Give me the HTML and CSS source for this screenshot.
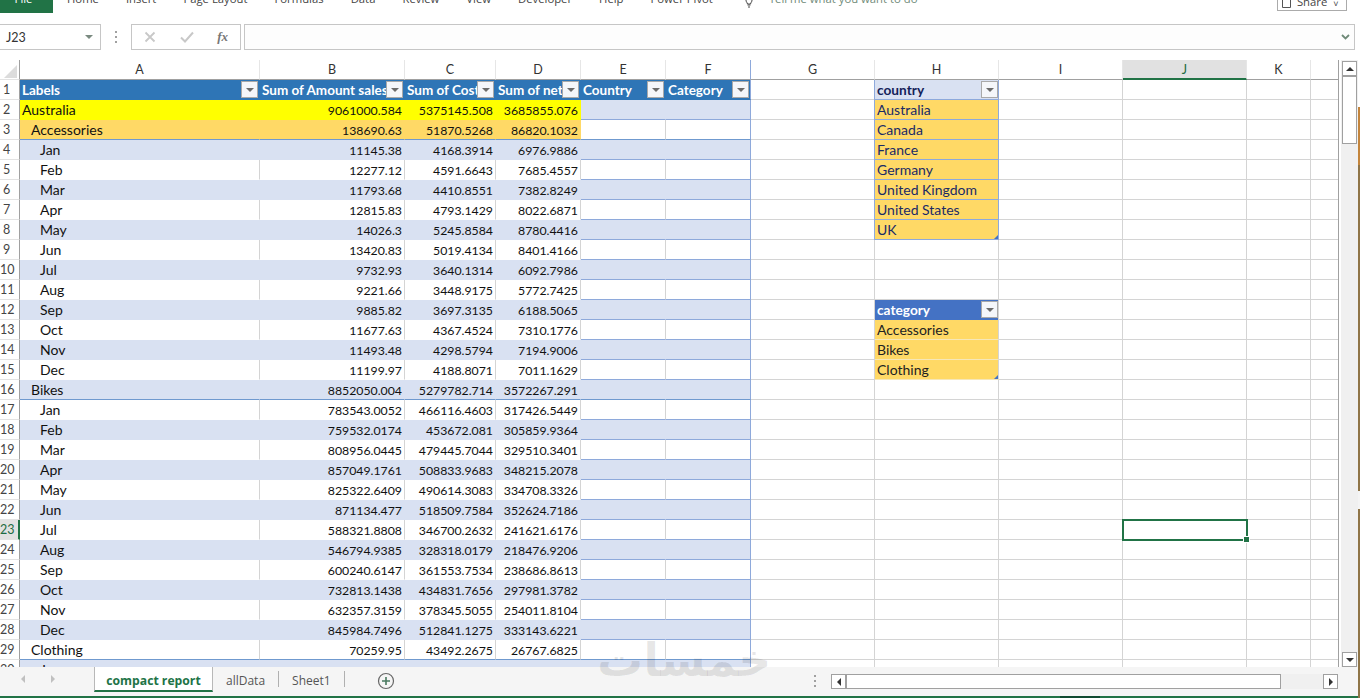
FILE: index.html
```html
<!DOCTYPE html>
<html lang="en">
<head>
<meta charset="utf-8">
<title>compact report</title>
<link rel="stylesheet" href="styles.css">
</head>
<body>
<div class="app">
<div class="main">
  <header class="ribbon">
    <div class="file"><span>File</span></div>
    <nav class="tabs"><span>Home</span><span>Insert</span><span>Page Layout</span><span>Formulas</span><span>Data</span><span>Review</span><span>View</span><span>Developer</span><span>Help</span><span>Power Pivot</span></nav>
    <svg class="bulb" width="12" height="8" viewBox="0 0 12 8"><path d="M3 0c0 2 1 2 1.500 4h3C8 2 9 2 9 0M4.500 5h3M5 7h2" fill="none" stroke="#444" stroke-width="1"/></svg>
    <span class="tell">Tell me what you want to do</span>
    <div class="share"><svg width="9" height="9" viewBox="0 0 9 9"><path d="M.5 0v8.500h8V0" fill="none" stroke="#555"/></svg><span>Share</span><b>&#709;</b></div>
  </header>
  <div class="fbar">
    <div class="namebox"><span>J23</span><i class="tri"></i></div>
    <div class="grip"></div>
    <div class="fxgroup">
      <svg width="12" height="12" viewBox="0 0 12 12"><path d="M1.500 1.500l9 9M10.500 1.500l-9 9" stroke="#c8c8c8" stroke-width="1.800"/></svg>
      <svg width="14" height="12" viewBox="0 0 14 12"><path d="M1 6.500l4 4 8-9" fill="none" stroke="#c8c8c8" stroke-width="2"/></svg>
      <em>fx</em>
    </div>
    <div class="finput"><svg width="9" height="6" viewBox="0 0 9 6"><path d="M1 1l3.500 3.500L8 1" fill="none" stroke="#6f8a78" stroke-width="1.800"/></svg></div>
  </div>
  <div class="work">
    <div class="sheet">
      <div class="row chead"><span class="corner"><svg width="13" height="13" viewBox="0 0 13 13"><path d="M13 0v13H0z" fill="#dcdcdc"/></svg></span><span>A</span><span>B</span><span>C</span><span>D</span><span>E</span><span>F</span><span>G</span><span>H</span><span>I</span><span class="cursel">J</span><span>K</span><span></span></div>
      <div class="row r-head"><span>1</span><span>Labels<i class="dd"></i></span><span>Sum of Amount sales<i class="dd"></i></span><span>Sum of Cost<i class="dd"></i></span><span>Sum of net<i class="dd"></i></span><span>Country<i class="dd"></i></span><span>Category<i class="dd"></i></span><span></span><span class="sl-h1">country<i class="dd"></i></span><span></span><span></span><span></span><span></span></div>
      <div class="row r-yellow r-band"><span>2</span><span>Australia</span><span>9061000.584</span><span>5375145.508</span><span>3685855.076</span><span></span><span></span><span></span><span class="sl1">Australia</span><span></span><span></span><span></span><span></span></div>
      <div class="row r-orange r-rule"><span>3</span><span class="l1">Accessories</span><span>138690.63</span><span>51870.5268</span><span>86820.1032</span><span></span><span></span><span></span><span class="sl1">Canada</span><span></span><span></span><span></span><span></span></div>
      <div class="row r-band"><span>4</span><span class="l2">Jan</span><span>11145.38</span><span>4168.3914</span><span>6976.9886</span><span></span><span></span><span></span><span class="sl1">France</span><span></span><span></span><span></span><span></span></div>
      <div class="row r-plain"><span>5</span><span class="l2">Feb</span><span>12277.12</span><span>4591.6643</span><span>7685.4557</span><span></span><span></span><span></span><span class="sl1">Germany</span><span></span><span></span><span></span><span></span></div>
      <div class="row r-band"><span>6</span><span class="l2">Mar</span><span>11793.68</span><span>4410.8551</span><span>7382.8249</span><span></span><span></span><span></span><span class="sl1">United Kingdom</span><span></span><span></span><span></span><span></span></div>
      <div class="row r-plain"><span>7</span><span class="l2">Apr</span><span>12815.83</span><span>4793.1429</span><span>8022.6871</span><span></span><span></span><span></span><span class="sl1">United States</span><span></span><span></span><span></span><span></span></div>
      <div class="row r-band"><span>8</span><span class="l2">May</span><span>14026.3</span><span>5245.8584</span><span>8780.4416</span><span></span><span></span><span></span><span class="sl1 end">UK</span><span></span><span></span><span></span><span></span></div>
      <div class="row r-plain"><span>9</span><span class="l2">Jun</span><span>13420.83</span><span>5019.4134</span><span>8401.4166</span><span></span><span></span><span></span><span class="sl-blank"></span><span></span><span></span><span></span><span></span></div>
      <div class="row r-band"><span>10</span><span class="l2">Jul</span><span>9732.93</span><span>3640.1314</span><span>6092.7986</span><span></span><span></span><span></span><span class="sl-blank"></span><span></span><span></span><span></span><span></span></div>
      <div class="row r-plain"><span>11</span><span class="l2">Aug</span><span>9221.66</span><span>3448.9175</span><span>5772.7425</span><span></span><span></span><span></span><span class="sl-blank"></span><span></span><span></span><span></span><span></span></div>
      <div class="row r-band"><span>12</span><span class="l2">Sep</span><span>9885.82</span><span>3697.3135</span><span>6188.5065</span><span></span><span></span><span></span><span class="sl-h2">category<i class="dd"></i></span><span></span><span></span><span></span><span></span></div>
      <div class="row r-plain"><span>13</span><span class="l2">Oct</span><span>11677.63</span><span>4367.4524</span><span>7310.1776</span><span></span><span></span><span></span><span class="sl2">Accessories</span><span></span><span></span><span></span><span></span></div>
      <div class="row r-band"><span>14</span><span class="l2">Nov</span><span>11493.48</span><span>4298.5794</span><span>7194.9006</span><span></span><span></span><span></span><span class="sl2">Bikes</span><span></span><span></span><span></span><span></span></div>
      <div class="row r-plain"><span>15</span><span class="l2">Dec</span><span>11199.97</span><span>4188.8071</span><span>7011.1629</span><span></span><span></span><span></span><span class="sl2 end">Clothing</span><span></span><span></span><span></span><span></span></div>
      <div class="row r-band r-rule"><span>16</span><span class="l1">Bikes</span><span>8852050.004</span><span>5279782.714</span><span>3572267.291</span><span></span><span></span><span></span><span class="sl-blank"></span><span></span><span></span><span></span><span></span></div>
      <div class="row r-plain"><span>17</span><span class="l2">Jan</span><span>783543.0052</span><span>466116.4603</span><span>317426.5449</span><span></span><span></span><span></span><span class="sl-blank"></span><span></span><span></span><span></span><span></span></div>
      <div class="row r-band"><span>18</span><span class="l2">Feb</span><span>759532.0174</span><span>453672.081</span><span>305859.9364</span><span></span><span></span><span></span><span class="sl-blank"></span><span></span><span></span><span></span><span></span></div>
      <div class="row r-plain"><span>19</span><span class="l2">Mar</span><span>808956.0445</span><span>479445.7044</span><span>329510.3401</span><span></span><span></span><span></span><span class="sl-blank"></span><span></span><span></span><span></span><span></span></div>
      <div class="row r-band"><span>20</span><span class="l2">Apr</span><span>857049.1761</span><span>508833.9683</span><span>348215.2078</span><span></span><span></span><span></span><span class="sl-blank"></span><span></span><span></span><span></span><span></span></div>
      <div class="row r-plain"><span>21</span><span class="l2">May</span><span>825322.6409</span><span>490614.3083</span><span>334708.3326</span><span></span><span></span><span></span><span class="sl-blank"></span><span></span><span></span><span></span><span></span></div>
      <div class="row r-band"><span>22</span><span class="l2">Jun</span><span>871134.477</span><span>518509.7584</span><span>352624.7186</span><span></span><span></span><span></span><span class="sl-blank"></span><span></span><span></span><span></span><span></span></div>
      <div class="row r-plain"><span class="rowsel">23</span><span class="l2">Jul</span><span>588321.8808</span><span>346700.2632</span><span>241621.6176</span><span></span><span></span><span></span><span class="sl-blank"></span><span></span><span class="active"></span><span></span><span></span></div>
      <div class="row r-band"><span>24</span><span class="l2">Aug</span><span>546794.9385</span><span>328318.0179</span><span>218476.9206</span><span></span><span></span><span></span><span class="sl-blank"></span><span></span><span></span><span></span><span></span></div>
      <div class="row r-plain"><span>25</span><span class="l2">Sep</span><span>600240.6147</span><span>361553.7534</span><span>238686.8613</span><span></span><span></span><span></span><span class="sl-blank"></span><span></span><span></span><span></span><span></span></div>
      <div class="row r-band"><span>26</span><span class="l2">Oct</span><span>732813.1438</span><span>434831.7656</span><span>297981.3782</span><span></span><span></span><span></span><span class="sl-blank"></span><span></span><span></span><span></span><span></span></div>
      <div class="row r-plain"><span>27</span><span class="l2">Nov</span><span>632357.3159</span><span>378345.5055</span><span>254011.8104</span><span></span><span></span><span></span><span class="sl-blank"></span><span></span><span></span><span></span><span></span></div>
      <div class="row r-band"><span>28</span><span class="l2">Dec</span><span>845984.7496</span><span>512841.1275</span><span>333143.6221</span><span></span><span></span><span></span><span class="sl-blank"></span><span></span><span></span><span></span><span></span></div>
      <div class="row r-plain r-rule"><span>29</span><span class="l1">Clothing</span><span>70259.95</span><span>43492.2675</span><span>26767.6825</span><span></span><span></span><span></span><span class="sl-blank"></span><span></span><span></span><span></span><span></span></div>
      <div class="row r-band"><span>30</span><span class="l2">Jan</span><span>8391.43</span><span>3890.5743</span><span>2400.7053</span><span></span><span></span><span></span><span class="sl-blank"></span><span></span><span></span><span></span><span></span></div>
    </div>
    <div class="vscroll">
      <div class="sbtn up"><i></i></div>
      <div class="thumb"></div>
      <div class="track"></div>
      <div class="sbtn down"><i></i></div>
    </div>
  </div>
  <footer class="sheetbar">
    <div class="navs"><i class="nl"></i><i class="nr"></i></div>
    <div class="stab active-tab">compact report</div>
    <div class="stab sep">allData</div>
    <div class="stab sep">Sheet1</div>
    <svg class="plus" width="18" height="18" viewBox="0 0 18 18"><circle cx="9" cy="9" r="7.500" fill="none" stroke="#666" stroke-width="1.200"/><path d="M9 5v8M5 9h8" stroke="#4a7a60" stroke-width="1.600"/></svg>
    <div class="hzone">
      <div class="grip"></div>
      <div class="hbtn"><i class="bl"></i></div>
      <div class="hthumb"></div>
      <div class="htrack"></div>
      <div class="hbtn"><i class="br"></i></div>
    </div>
  </footer>
  <div class="status"><i></i></div>
  <div class="mark" dir="rtl" lang="ar">خمسات</div>
</div>
<div class="edge"></div>
</div>
</body>
</html>
```
FILE: styles.css
```css
*, *::before, *::after { box-sizing: border-box; }
html, body { margin: 0; height: 100%; overflow: hidden; background: #fff; }
body { font-family: "Lato", "Liberation Sans", sans-serif; color: #111; }
.app { display: flex; width: 1360px; height: 698px; }
.main { position: relative; width: 1358px; height: 698px; display: flex; flex-direction: column; overflow: hidden; background: #fff; }
.edge { width: 2px; height: 698px; background: linear-gradient(#fff 0 107px, #c4853c 107px 165px, #8f7548 165px 491px, #f4f4f4 491px 509px, #8f7548 509px); }

/* ribbon */
.ribbon { height: 24px; flex: none; display: flex; align-items: flex-start; overflow: hidden; font-family: "Open Sans", sans-serif; font-size: 11.300px; color: #444; }
.file { width: 53px; height: 13px; background: #217346; color: #fff; text-align: center; line-height: 6px; flex: none; overflow: hidden; padding-right: 6px; }
.file span { display: block; margin-top: -4px; }
.tabs { display: flex; gap: 27px; margin-left: 14px; margin-top: -4px; line-height: 6px; height: 13px; flex: none; }
.bulb { margin: 0 0 0 30px; flex: none; }
.tell { margin-left: 14px; margin-top: -4px; line-height: 6px; color: #6f8a78; flex: none; width: 150px; white-space: nowrap; }
.share { margin-left: 358px; margin-top: -4px; width: 70px; height: 15px; border: 1px solid #ababab; display: flex; align-items: center; gap: 6px; padding: 0 4px; flex: none; background: #fff; line-height: 14px; }
.share span { margin-top: -3px; }
.share b { font-weight: 400; font-size: 9px; }

/* formula bar */
.fbar { height: 26px; flex: none; display: flex; background: #fff; }
.namebox { width: 101px; height: 26px; border: 1px solid #c6c6c6; border-left: 0; display: flex; align-items: center; justify-content: space-between; padding: 0 7px 0 6px; font-size: 12.500px; color: #333; }
.tri { width: 0; height: 0; border: 4px solid transparent; border-top: 4px solid #7a8a80; border-bottom: 0; }
.fbar > .grip { width: 30px; height: 26px; }
.grip { position: relative; flex: none; }
.grip::before { content: ""; position: absolute; left: 14px; top: 12px; width: 2px; height: 2px; background: #a0a0a0; box-shadow: 0 -5px #a0a0a0, 0 5px #a0a0a0; }
.fxgroup { width: 110px; height: 26px; border: 1px solid #c6c6c6; display: flex; align-items: center; justify-content: space-between; padding: 0 12px; flex: none; }
.fxgroup em { font-family: "Liberation Serif", serif; font-size: 13px; font-weight: 700; color: #777; }
.finput { margin-left: 3px; width: 1111px; height: 26px; border: 1px solid #c6c6c6; background: #fdfdfd; display: flex; align-items: center; justify-content: flex-end; padding-right: 4px; flex: none; }

/* worksheet */
.work { flex: 1; min-height: 0; padding-top: 10px; display: flex; }
.sheet { width: 1339px; height: 607px; overflow: hidden; flex: none; border-right: 1px solid #a0a0a0; }
.row { display: grid; grid-template-columns: 20px 240px 145px 91px 85px 85px 85px 124px 124px 124px 124px 64px 27px; height: 20px; font-size: 14px; }
.row > span { position: relative; display: block; height: 20px; line-height: 19px; padding: 0 2px; border-right: 1px solid #d4d4d4; border-bottom: 1px solid #d4d4d4; white-space: nowrap; overflow: hidden; }
.row > span:nth-child(2) { overflow: visible; }
.row > span:first-child { text-align: center; padding: 0 6px 0 0; color: #444; font-size: 12.500px; line-height: 20px; border-right: 1px solid #a0a0a0; border-bottom-color: #e3e3e3; background: #fff; }
.row > span:nth-child(n+3):nth-child(-n+5) { text-align: right; font-size: 12.300px; line-height: 21px; }
.row > span:last-child { border-right: 0; }
.chead > span { text-align: center !important; line-height: 19px !important; font-size: 12.500px !important; border-bottom: 1px solid #a0a0a0; border-right: 1px solid #e6e6e6; color: #333; padding: 0; background: #fff; }
.chead > .corner { border-bottom: 1px solid #a0a0a0; text-align: left !important; }
.corner svg { position: absolute; left: 4px; top: 5px; }
.chead > .cursel { background: #e1e1e1; color: #1d6b42; border-bottom: 2px solid #217346; }
.rowsel { background: #e1e1e1 !important; color: #1d6b42 !important; border-right: 2px solid #217346 !important; }

.l1 { padding-left: 11px !important; }
.l2 { padding-left: 20px !important; }

/* pivot table rows */
.r-head > span:nth-child(n+2):nth-child(-n+7) { background: #2e75b6; color: #fff; font-weight: 700; font-size: 13.500px; line-height: 21px; text-align: left !important; border-color: transparent; }
.r-head > span:nth-child(2) { overflow: hidden; }
.r-yellow > span:nth-child(n+2):nth-child(-n+5) { background: #ff0 !important; color: #111; border-right-color: transparent; border-bottom-color: #f0f0e0; }
.r-orange > span:nth-child(n+2):nth-child(-n+5) { background: #ffd966 !important; border-right-color: transparent; }
.r-band > span:nth-child(n+2):nth-child(-n+7) { background: #d9e1f2; border-right-color: transparent; border-bottom-color: transparent; }
.r-plain > span:nth-child(n+2):nth-child(-n+5) { border-bottom-color: transparent; }
.row:not(.chead):not(.r-head) > span:nth-child(6), .row:not(.chead):not(.r-head) > span:nth-child(7) { border-bottom: 1px solid #8ea9db; }
.row > span:nth-child(7) { border-right: 1px solid #8ea9db !important; }
.r-rule > span:nth-child(n+2):nth-child(-n+7) { border-bottom: 1px solid #6f99cf !important; }

/* dropdown buttons */
.dd { position: absolute; right: 1px; top: 1px; width: 17px; height: 17px; background: #f4f6fa; border: 1px solid #a9a9a9; }
.dd::after { content: ""; position: absolute; left: 4px; top: 6px; border: 4px solid transparent; border-top: 4px solid #6b6b6b; border-bottom: 0; }
.sl-h1 .dd, .sl-h2 .dd { right: 0; }

/* slicer tables */
.row > .sl-blank { box-shadow: -1px 0 0 #d4d4d4; }
.row > .sl-h1 { background: #d9e1f2; color: #14235a; font-weight: 700; font-size: 13.700px; box-shadow: -1px 0 0 #8ea9db; border-right: 1px solid #8ea9db; border-bottom: 1px solid #8ea9db; }
.row > .sl-h2 { background: #4472c4; color: #fff; font-weight: 700; font-size: 13.700px; border-right: 1px solid #d4d4d4; border-bottom: 0; box-shadow: -1px 0 0 #d4d4d4; }
.row > .sl1 { background: #ffd966; color: #1a2a66; box-shadow: -1px 0 0 #8ea9db; border-right: 1px solid #8ea9db; border-bottom: 1px solid #8ea9db; }
.row > .sl2 { background: #ffd966; color: #222; box-shadow: -1px 0 0 #d4d4d4; border-bottom: 1px solid #f6e7b8; border-right: 1px solid #d4d4d4; }
.end::after { content: ""; position: absolute; right: 0; bottom: 0; border-left: 4px solid transparent; border-bottom: 4px solid #4472c4; }

/* active cell */
.row > .active { overflow: visible; z-index: 2; }
.active::before { content: ""; position: absolute; left: -1px; top: -1px; width: 126px; height: 22px; border: 2px solid #217346; }
.active::after { content: ""; position: absolute; left: 121px; top: 17px; width: 5px; height: 5px; background: #217346; box-shadow: 0 0 0 1px #fff; }

/* scrollbars */
.vscroll { width: 17px; margin-left: 2px; background: #f0f0f0; height: 607px; display: flex; flex-direction: column; flex: none; padding: 1px 1px 0 1px; }
.sbtn { width: 15px; height: 15px; border: 1px solid #a0a0a0; background: #fff; display: flex; align-items: center; justify-content: center; flex: none; }
.up i { border: 4px solid transparent; border-bottom: 4px solid #333; border-top: 0; }
.down i { border: 4px solid transparent; border-top: 4px solid #333; border-bottom: 0; }
.thumb { height: 68px; border: 1px solid #a0a0a0; background: #fff; flex: none; }
.track { flex: 1; }

/* sheet tabs */
.sheetbar { height: 29px; flex: none; display: flex; align-items: flex-start; background: #f5f5f5; font-family: "Open Sans", sans-serif; font-size: 12px; color: #555; padding-right: 20px; }
.navs { width: 94px; height: 24px; display: flex; align-items: center; gap: 26px; padding-left: 21px; flex: none; }
.nl { border: 4px solid transparent; border-right: 4px solid #c0c0c0; border-left: 0; }
.nr { border: 4px solid transparent; border-left: 4px solid #c0c0c0; border-right: 0; }
.stab { height: 25px; line-height: 28px; flex: none; white-space: nowrap; }
.active-tab { width: 119px; background: #fff; color: #217346; font-weight: 700; text-align: center; border-bottom: 2px solid #217346; border-left: 1px solid #b8b8b8; border-right: 1px solid #b8b8b8; font-size: 12.200px; }
.sep { padding: 0 14px 0 13px; position: relative; }
.sep::after { content: ""; position: absolute; right: 0; top: 4px; height: 16px; border-right: 1px solid #b0b0b0; }
.plus { margin: 5px 0 0 32px; flex: none; }
.hzone { margin-left: auto; width: 538px; height: 24px; display: flex; align-items: flex-start; flex: none; padding-top: 7px; }
.hzone .grip { width: 31px; height: 14px; }
.hzone .grip::before { left: 14px; top: 6px; }
.hbtn { width: 15px; height: 15px; border: 1px solid #a0a0a0; background: #fff; display: flex; align-items: center; justify-content: center; flex: none; }
.bl { border: 4px solid transparent; border-right: 4px solid #333; border-left: 0; }
.br { border: 4px solid transparent; border-left: 4px solid #333; border-right: 0; }
.hthumb { width: 435px; height: 15px; border: 1px solid #a0a0a0; background: #fff; flex: none; }
.htrack { flex: 1; height: 15px; background: #f0f0f0; }
.status { height: 2px; flex: none; background: #217346; position: relative; }
.status i { position: absolute; left: 1060px; width: 40px; height: 2px; background: #0f4a30; }

/* watermark over the sheet */
.mark { position: absolute; left: 597px; top: 630px; font-family: "DejaVu Sans", sans-serif; font-size: 46px; font-weight: 700; line-height: 60px; color: rgba(0,0,0,.09); pointer-events: none; white-space: nowrap; }
```
